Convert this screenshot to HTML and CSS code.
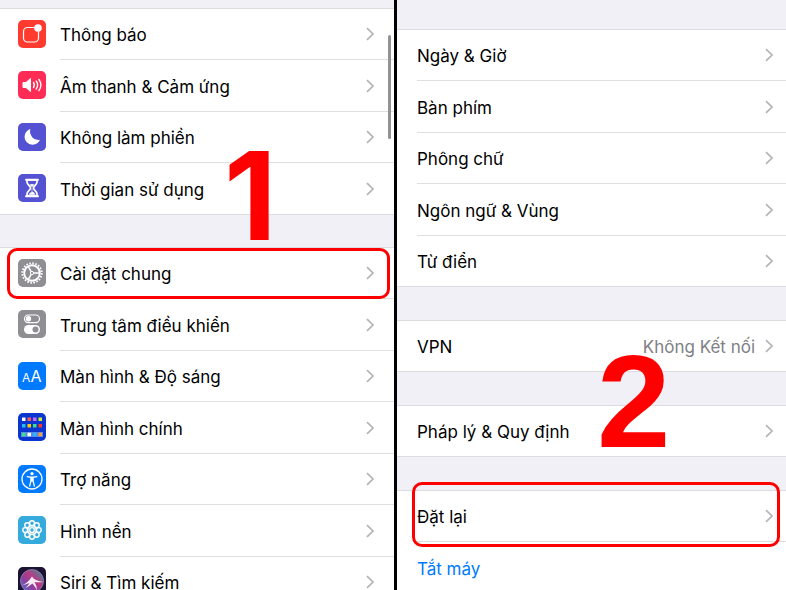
FILE: index.html
```html
<!DOCTYPE html>
<html lang="vi">
<head>
<meta charset="utf-8">
<meta name="viewport" content="width=device-width, initial-scale=1">
<title>Cài đặt</title>
<link rel="stylesheet" href="styles.css">
</head>
<body>
<svg class="defs" aria-hidden="true">
  <symbol id="chevron" viewBox="0 0 8 14"><path d="M1 1.200 7 7 1 12.800" fill="none" stroke="currentColor" stroke-width="1.700"/></symbol>
</svg>
<main class="screens">
  <section class="pane pane-settings">
    <nav class="group">
      <a class="row" href="#">
        <svg class="icon" viewBox="0 0 28 28"><rect width="28" height="28" rx="5" fill="#ff3b30"/><path d="M16.500 7.500H9.500a4 4 0 0 0-4 4v6.500a4 4 0 0 0 4 4h7a4 4 0 0 0 4-4v-6.500" fill="none" stroke="#fff" stroke-width="1.200"/><circle cx="20" cy="8" r="3.800" fill="#fff"/></svg>
        <span class="body"><span class="label">Thông báo</span><svg class="chevron"><use href="#chevron"/></svg></span>
      </a>
      <a class="row" href="#">
        <svg class="icon" viewBox="0 0 28 28"><rect width="28" height="28" rx="5" fill="#ff2d55"/><path d="M5 11.500h3l4.500-4v13l-4.500-4H5z" fill="#fff" stroke="#fff" stroke-linejoin="round"/><g fill="none" stroke="#fff" stroke-width="1.400" stroke-linecap="round"><path d="M15.500 11.500q1.700 2.500 0 5M18.200 10q2.800 4 0 8M20.900 8.500q4 5.500 0 11"/></g></svg>
        <span class="body"><span class="label">Âm thanh &amp; Cảm ứng</span><svg class="chevron"><use href="#chevron"/></svg></span>
      </a>
      <a class="row" href="#">
        <svg class="icon" viewBox="0 0 28 28"><rect width="28" height="28" rx="5" fill="#5451d2"/><path d="M12.500 6A8 8 0 1 0 22 16.800 8.300 8.300 0 0 1 12.500 6z" fill="#fff"/></svg>
        <span class="body"><span class="label">Không làm phiền</span><svg class="chevron"><use href="#chevron"/></svg></span>
      </a>
      <a class="row" href="#">
        <svg class="icon" viewBox="0 0 28 28"><rect width="28" height="28" rx="5" fill="#5451d2"/><path d="M9 6h10v2c0 3-3.500 3.500-3.500 6s3.500 3 3.500 6v2H9v-2c0-3 3.500-3.500 3.500-6S9 11 9 8z" fill="#5451d2" stroke="#fff" stroke-width="1.700" stroke-linejoin="round"/><path d="M8 5.800h12M8 22.200h12" stroke="#fff" stroke-width="2" stroke-linecap="round"/><path d="M12 10.500h4L14 13zM14 14v4M11 20.500q1-2 3-2.500t3 2.500z" fill="#fff" stroke="#fff" stroke-width=".6"/></svg>
        <span class="body"><span class="label">Thời gian sử dụng</span><svg class="chevron"><use href="#chevron"/></svg></span>
      </a>
    </nav>
    <nav class="group">
      <a class="row marked marked-general" href="#">
        <svg class="icon" viewBox="0 0 28 28"><rect width="28" height="28" rx="5" fill="#8e8e93"/><g fill="none" stroke="#fff"><circle cx="14" cy="14" r="9.700" stroke-width="1.900" stroke-dasharray="1.600 1.447"/><circle cx="14" cy="14" r="7.800" stroke-width="1.900"/><circle cx="14" cy="14" r="1.600" stroke-width="1"/><path d="M15.500 14H22M13.200 12.700 10 7.100M13.200 15.300 10 20.900" stroke-width="1.500"/></g></svg>
        <span class="body"><span class="label">Cài đặt chung</span><svg class="chevron"><use href="#chevron"/></svg></span>
      </a>
      <a class="row" href="#">
        <svg class="icon" viewBox="0 0 28 28"><rect width="28" height="28" rx="5" fill="#8e8e93"/><rect x="6.500" y="5" width="15" height="7.600" rx="3.800" fill="none" stroke="#fff" stroke-width="1.200"/><circle cx="10.500" cy="8.800" r="2.700" fill="#fff"/><rect x="6" y="15" width="16" height="9" rx="4.500" fill="#fff"/><circle cx="17.500" cy="19.500" r="3" fill="#8e8e93"/></svg>
        <span class="body"><span class="label">Trung tâm điều khiển</span><svg class="chevron"><use href="#chevron"/></svg></span>
      </a>
      <a class="row" href="#">
        <svg class="icon" viewBox="0 0 28 28"><rect width="28" height="28" rx="5" fill="#007aff"/><text x="4" y="19.500" class="glyph-small">A</text><text x="12.500" y="19.500" class="glyph-large">A</text></svg>
        <span class="body"><span class="label">Màn hình &amp; Độ sáng</span><svg class="chevron"><use href="#chevron"/></svg></span>
      </a>
      <a class="row" href="#">
        <svg class="icon" viewBox="0 0 28 28"><rect width="28" height="28" rx="5" fill="#0a35cf"/><path d="M3 19h22v5H3z" fill="#5b86e8"/><g><path fill="#fff" d="M4 4.500h3.500V8H4zM9.500 19.700H13v3.500H9.500z"/><path fill="#ff5a50" d="M9.500 4.500H13V8H9.500z"/><path fill="#c46bff" d="M15 4.500h3.500V8H15z"/><path fill="#d8ee28" d="M20.500 4.500H24V8h-3.500z"/><path fill="#26b8ff" d="M4 11h3.500v3.500H4zM15 19.700h3.500v3.500H15z"/><path fill="#ffcc00" d="M9.500 11H13v3.500H9.500z"/><path fill="#3fe08a" d="M15 11h3.500v3.500H15zM4 19.700h3.500v3.500H4z"/><path fill="#ff3528" d="M20.500 11H24v3.500h-3.500z"/><path fill="#ff9d2e" d="M20.500 19.700H24v3.500h-3.500z"/></g></svg>
        <span class="body"><span class="label">Màn hình chính</span><svg class="chevron"><use href="#chevron"/></svg></span>
      </a>
      <a class="row" href="#">
        <svg class="icon" viewBox="0 0 28 28"><rect width="28" height="28" rx="5" fill="#007aff"/><circle cx="14" cy="14" r="10" fill="none" stroke="#fff" stroke-width="1.300"/><circle cx="14" cy="8.700" r="1.600" fill="#fff"/><path d="M9.200 11.700 14 12.500l4.800-.8M14 12v4M12.900 12.500v3.500l-1.200 5M15.100 12.500v3.500l1.200 5" fill="none" stroke="#fff" stroke-width="1.300" stroke-linecap="round"/></svg>
        <span class="body"><span class="label">Trợ năng</span><svg class="chevron"><use href="#chevron"/></svg></span>
      </a>
      <a class="row" href="#">
        <svg class="icon" viewBox="0 0 28 28"><rect width="28" height="28" rx="5" fill="#35aadc"/><g fill="none" stroke="#fff" stroke-width="1.400"><circle cx="14" cy="14" r="2.400"/><circle cx="14" cy="7.200" r="2.400"/><circle cx="18.800" cy="9.200" r="2.400"/><circle cx="20.800" cy="14" r="2.400"/><circle cx="18.800" cy="18.800" r="2.400"/><circle cx="14" cy="20.800" r="2.400"/><circle cx="9.200" cy="18.800" r="2.400"/><circle cx="7.200" cy="14" r="2.400"/><circle cx="9.200" cy="9.200" r="2.400"/><circle cx="14" cy="14" r="4.200"/></g></svg>
        <span class="body"><span class="label">Hình nền</span><svg class="chevron"><use href="#chevron"/></svg></span>
      </a>
      <a class="row" href="#">
        <svg class="icon" viewBox="0 0 28 28"><defs><linearGradient id="orb" x1="0" y1="1" x2="1" y2="0"><stop offset="0" stop-color="#4a7fe0"/><stop offset=".35" stop-color="#8b3f9e"/><stop offset=".6" stop-color="#b83a86"/><stop offset="1" stop-color="#2b9c9c"/></linearGradient></defs><rect width="28" height="28" rx="5" fill="#1c1233"/><circle cx="14" cy="14" r="11.500" fill="url(#orb)" stroke="#8d88a8" stroke-width=".8"/><path d="M3.500 18.500q6-2 10.500-9 1.500 3.500 11 5.500-5 .6-8.500 0 2 3 2.500 8-2.500-4-4.500-6.500-3 2.500-7 4.500 3-3 4-5-3 1-8 2.500z" fill="#fff" opacity=".9"/></svg>
        <span class="body"><span class="label">Siri &amp; Tìm kiếm</span><svg class="chevron"><use href="#chevron"/></svg></span>
      </a>
    </nav>
    <span class="scrollbar"></span>
    <span class="step step-one">1</span>
  </section>
  <section class="pane pane-general">
    <nav class="group">
      <a class="row" href="#"><span class="body"><span class="label">Ngày &amp; Giờ</span><svg class="chevron"><use href="#chevron"/></svg></span></a>
      <a class="row" href="#"><span class="body"><span class="label">Bàn phím</span><svg class="chevron"><use href="#chevron"/></svg></span></a>
      <a class="row" href="#"><span class="body"><span class="label">Phông chữ</span><svg class="chevron"><use href="#chevron"/></svg></span></a>
      <a class="row" href="#"><span class="body"><span class="label">Ngôn ngữ &amp; Vùng</span><svg class="chevron"><use href="#chevron"/></svg></span></a>
      <a class="row" href="#"><span class="body"><span class="label">Từ điển</span><svg class="chevron"><use href="#chevron"/></svg></span></a>
    </nav>
    <nav class="group">
      <a class="row" href="#"><span class="body"><span class="label">VPN</span><span class="value">Không Kết nối</span><svg class="chevron"><use href="#chevron"/></svg></span></a>
    </nav>
    <nav class="group">
      <a class="row" href="#"><span class="body"><span class="label">Pháp lý &amp; Quy định</span><svg class="chevron"><use href="#chevron"/></svg></span></a>
    </nav>
    <nav class="group">
      <a class="row marked marked-reset" href="#"><span class="body"><span class="label">Đặt lại</span><svg class="chevron"><use href="#chevron"/></svg></span></a>
      <a class="row action" href="#"><span class="body"><span class="label">Tắt máy</span></span></a>
    </nav>
    <span class="step step-two">2</span>
  </section>
</main>
</body>
</html>
```
FILE: styles.css
```css
* { box-sizing: border-box; }

body {
  margin: 0;
  font-family: Inter, "Noto Sans", sans-serif;
  font-size: 17px;
  line-height: 24px;
  color: #000;
}

.defs { position: absolute; width: 0; height: 0; }

.screens {
  display: flex;
  height: 100vh;
  overflow: hidden;
  background: #000;
  gap: 3px;
}

.pane {
  position: relative;
  display: flex;
  flex-direction: column;
  min-width: 0;
  overflow: hidden;
  background: #f0f0f6;
}

.pane-settings { flex: 394 1 0; gap: 32px; padding-top: 8px; }
.pane-general { flex: 389 1 0; gap: 33px; padding-top: 29px; }

.group {
  flex: none;
  border-top: 1px solid #dcdce0;
  background: #fff;
}

.row {
  position: relative;
  display: flex;
  align-items: center;
  gap: 14px;
  height: 51px;
  padding-left: 18px;
  color: inherit;
  text-decoration: none;
}

.row:nth-child(even) { height: 52px; }
.pane-general .row { padding-left: 20px; }

.icon { flex: none; width: 28px; height: 28px; margin-bottom: 2px; }

.body {
  flex: 1;
  align-self: stretch;
  display: flex;
  align-items: center;
  gap: 10px;
  min-width: 0;
  padding-right: 20px;
  border-bottom: 1px solid #dfdfe2;
}

.pane-general .body { padding-right: 13px; }

.row:last-child { border-bottom: 1px solid #dcdce0; }
.row:last-child .body { border-bottom: 0; }

.label, .value { padding-top: 2px; white-space: nowrap; }
.label { flex: 1; }
.value { color: #808085; }
.chevron { flex: none; width: 8px; height: 14px; color: #b4b4b8; }
.action { color: #007aff; }

.glyph-small, .glyph-large { fill: #fff; font-family: Inter, sans-serif; }
.glyph-small { font-size: 12px; }
.glyph-large { font-size: 16px; }

.marked::after {
  content: "";
  position: absolute;
  z-index: 1;
  border: 3px solid #f00;
  border-radius: 10px;
}

.marked-general::after { inset: 0 4px 0 7px; }
.marked-reset::after { inset: -9px 6px -5px 15px; }

.scrollbar {
  position: absolute;
  top: 35px;
  right: 3px;
  width: 3px;
  height: 104px;
  border-radius: 2px;
  background: #939395;
}

.step {
  position: absolute;
  z-index: 2;
  color: #f00;
  font-weight: 700;
  line-height: 1;
}

.step-one { top: 135px; left: 224px; font-family: Inter, sans-serif; font-size: 122px; }
.step-two { top: 336px; left: 200px; font-family: "Liberation Sans", sans-serif; font-size: 132px; }
```
